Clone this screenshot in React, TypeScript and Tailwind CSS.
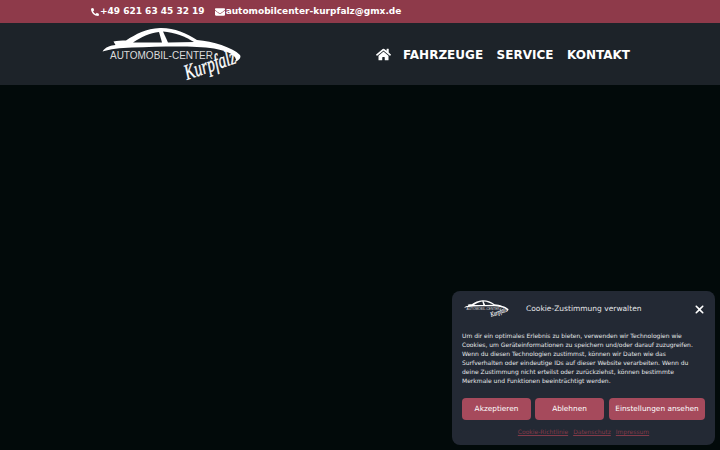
import { FaEnvelope, FaHome, FaPhoneAlt } from "react-icons/fa";
import { FaXmark } from "react-icons/fa6";

const navItems = ["FAHRZEUGE", "SERVICE", "KONTAKT"];
const buttons = [
  { label: "Akzeptieren", width: "w-[69px]" },
  { label: "Ablehnen", width: "w-[69px]" },
  { label: "Einstellungen ansehen", width: "ml-px w-[96px]" },
];
const links = ["Cookie-Richtlinie", "Datenschutz", "Impressum"];

function Logo({ className, small = false }: { className?: string; small?: boolean }) {
  return (
    <svg viewBox="0 0 140 56" className={`overflow-visible ${className}`} aria-label="Automobil-Center Kurpfalz">
      <path
        d="M0.5 24.5 C3 20 9 18.5 13.5 18 L11.5 14.5 C15 13.5 20 13.5 24 13.5 C34 7 44 1.5 58 1 C72 0.6 84 6 95 13 C111 14.5 130 20 138 28 C139.5 30.5 137 33 134 34.5 C135 29 128 24.5 112 21.5 C92 18.5 60 19.5 30 20.5 C18 21 8 22 0.5 24.5 Z"
        fill="#fff"
      />
      <path d="M31 15.5 C39 10 48 6 57 5 L60 15.5 Z" fill={small ? "#232934" : "#1d2329"} />
      <path d="M61 4.5 C72 5 84 10 92 15 L66 15.5 Z" fill={small ? "#232934" : "#1d2329"} />
      <text
        x="8"
        y="32"
        fontFamily="'Liberation Sans', sans-serif"
        fontSize="10.5"
        fill="#dcdcdc"
        textLength="103"
        lengthAdjust="spacingAndGlyphs"
      >
        AUTOMOBIL-CENTER
      </text>
      <text
        x="85"
        y="53"
        transform="rotate(-19 85 53)"
        fontFamily="'Liberation Serif', serif"
        fontStyle="italic"
        fontSize="22"
        fill="#fff"
        stroke="#fff"
        strokeWidth="0.35"
        textLength="53"
        lengthAdjust="spacingAndGlyphs"
      >
        Kurpfalz
      </text>
    </svg>
  );
}

function CookieModal() {
  return (
    <div className="absolute left-[452px] top-[291px] flex h-[154px] w-[263px] flex-col rounded-lg bg-[#232934] px-[10px] font-['DejaVu_Sans',sans-serif] text-[#e4e6e8]">
      <div className="mt-[7px] flex h-[22px] items-center">
        <Logo className="ml-[2px] h-[18px] w-[45px]" small />
        <span className="ml-[17px] text-[7.5px] leading-none">Cookie-Zustimmung verwalten</span>
        <FaXmark className="-mr-px ml-auto text-[13px] text-white" />
      </div>
      <p className="mt-[11px] text-[6px] leading-[9px]">
        Um dir ein optimales Erlebnis zu bieten, verwenden wir Technologien wie
        <br />
        Cookies, um Geräteinformationen zu speichern und/oder darauf zuzugreifen.
        <br />
        Wenn du diesen Technologien zustimmst, können wir Daten wie das
        <br />
        Surfverhalten oder eindeutige IDs auf dieser Website verarbeiten. Wenn du
        <br />
        deine Zustimmung nicht erteilst oder zurückziehst, können bestimmte
        <br />
        Merkmale und Funktionen beeinträchtigt werden.
      </p>
      <div className="mt-[13px] flex gap-[4px]">
        {buttons.map((b) => (
          <div
            key={b.label}
            className={`flex h-[22px] items-center justify-center whitespace-nowrap rounded bg-[#a64a5c] text-[7.35px] text-white ${b.width}`}
          >
            {b.label}
          </div>
        ))}
      </div>
      <div className="mt-[7px] flex justify-center gap-[5px] text-[6px] leading-[9px] text-[#833a49] underline">
        {links.map((l) => (
          <span key={l}>{l}</span>
        ))}
      </div>
    </div>
  );
}

export default function App() {
  return (
    <div className="relative flex h-[450px] w-[720px] flex-col overflow-hidden bg-[#020a0a] font-['DejaVu_Sans',sans-serif]">
      <div className="flex h-[23px] items-center bg-[#8e3a4a] pl-[91px] text-[9px] font-bold text-white">
        <FaPhoneAlt className="mr-px text-[8px]" />
        <span>+49 621 63 45 32 19</span>
        <FaEnvelope className="ml-[10px] mr-px text-[10px]" />
        <span>automobilcenter-kurpfalz@gmx.de</span>
      </div>
      <header className="flex h-[62px] items-center bg-[#1d2329] pl-[102px]">
        <Logo className="h-[56px] w-[140px] translate-y-[1px]" />
        <nav className="ml-[134px] flex items-center text-[12px] font-bold text-white">
          <FaHome className="mr-[12px] text-[15px]" />
          <div className="mt-[2px] flex gap-[13.5px]">
            {navItems.map((n) => (
              <span key={n}>{n}</span>
            ))}
          </div>
        </nav>
      </header>
      <main className="flex-1" />
      <CookieModal />
    </div>
  );
}
